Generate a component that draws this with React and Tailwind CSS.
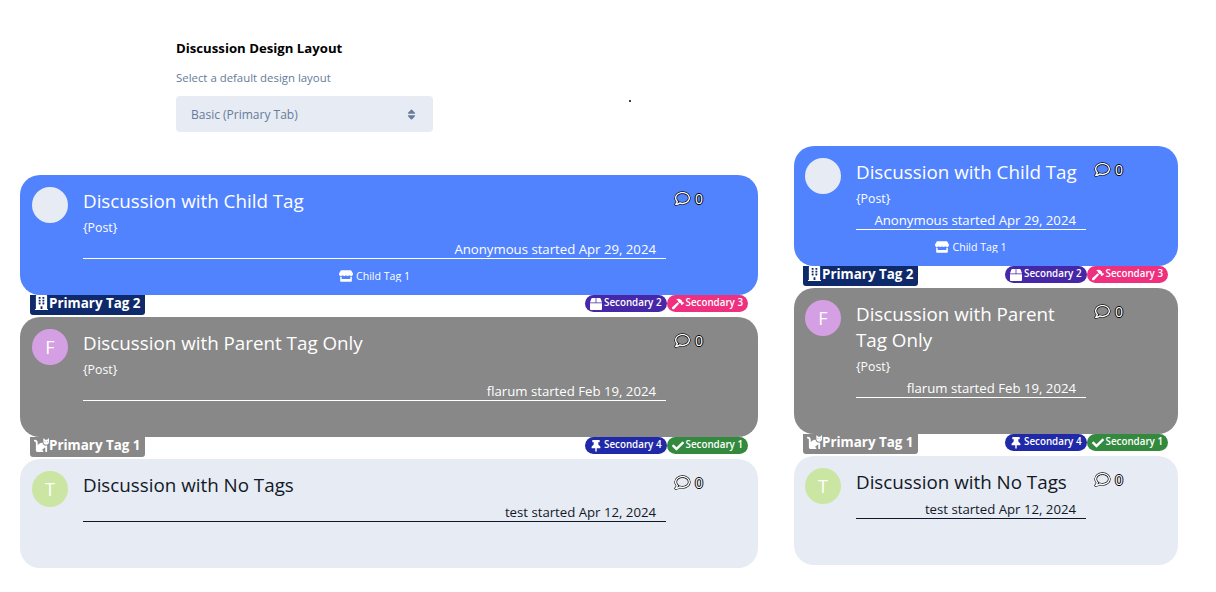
import { FaBox, FaBuilding, FaCat, FaCheck, FaHammer, FaRegComment, FaStore, FaThumbtack, FaSort } from 'react-icons/fa';

const cards = [
  {
    title: 'Discussion with Child Tag',
    post: '{Post}',
    by: 'Anonymous started Apr 29, 2024',
    bg: 'bg-[#5183ff]',
    text: 'text-white',
    line: 'border-white',
    avatar: '',
    avatarBg: 'bg-[#e7ebf3]',
    child: true,
    primary: { name: 'Primary Tag 2', Icon: FaBuilding, bg: 'bg-[#0e2a6b]' },
    secondary: [
      { name: 'Secondary 2', Icon: FaBox, bg: 'bg-[#4527a8]' },
      { name: 'Secondary 3', Icon: FaHammer, bg: 'bg-[#ee307f]' },
    ],
  },
  {
    title: 'Discussion with Parent Tag Only',
    post: '{Post}',
    by: 'flarum started Feb 19, 2024',
    bg: 'bg-[#888888]',
    text: 'text-white',
    line: 'border-white',
    avatar: 'F',
    avatarBg: 'bg-[#d5a0e3]',
    primary: { name: 'Primary Tag 1', Icon: FaCat, bg: 'bg-[#888888]' },
    secondary: [
      { name: 'Secondary 4', Icon: FaThumbtack, bg: 'bg-[#2029a8]' },
      { name: 'Secondary 1', Icon: FaCheck, bg: 'bg-[#338a3e]' },
    ],
  },
  {
    title: 'Discussion with No Tags',
    by: 'test started Apr 12, 2024',
    bg: 'bg-[#e7ebf3]',
    text: 'text-[#111827]',
    line: 'border-[#111827]',
    avatar: 'T',
    avatarBg: 'bg-[#cbe6a3]',
    short: true,
  },
];

const Card = ({ card, narrow }) => {
  const { Icon: PrimaryIcon } = card.primary || {};
  return (
    <div>
      <div
        className={`flex rounded-[20px] pt-3 ${narrow ? 'pl-[11px]' : 'pl-3'} ${card.bg} ${card.text} ${
          card.short ? 'h-[109px]' : narrow && card.avatar === 'F' ? 'h-[146px]' : 'h-[120px]'
        }`}
      >
        <div className={`flex h-9 w-9 shrink-0 items-center justify-center rounded-full text-lg text-white ${card.avatarBg}`}>
          {card.avatar}
        </div>
        <div className={`ml-[15px] flex min-w-0 flex-col pt-[1px] ${narrow ? 'w-[230px]' : 'w-[583px]'}`}>
          <div className="text-[18.8px] leading-[26px]">{card.title}</div>
          {card.post && <div className="mt-[5px] text-[12.3px] leading-[18px]">{card.post}</div>}
          <div className={`border-b pr-[10px] text-right text-[13.2px] leading-[18px] ${card.line} ${card.post ? 'mt-[3px]' : 'mt-[5px]'}`}>
            {card.by}
          </div>
          {card.child && (
            <div className="mt-[10px] flex h-[13px] items-start justify-center gap-[3px] overflow-hidden text-[10.6px] leading-[14px]">
              <FaStore className="text-[14px]" />
              Child Tag 1
            </div>
          )}
        </div>
        <div className="ml-[9px] mt-[3px] flex h-4 items-center gap-[5px] text-[14px] text-white [text-shadow:1px_0_0_#000,-1px_0_0_#000,0_1px_0_#000,0_-1px_0_#000]">
          <FaRegComment stroke="#000" strokeWidth={45} className="overflow-visible text-[15px] text-white [paint-order:stroke]" />
          0
        </div>
      </div>
      {card.primary && (
        <div className={`flex h-[22px] items-start justify-between pr-[10px] ${narrow ? 'pl-[9px]' : 'pl-[10px]'}`}>
          <div className={`flex h-5 items-start overflow-hidden rounded-b-[3px] px-[4px] text-[13.4px] font-bold leading-[17px] text-white ${card.primary.bg}`}>
            <PrimaryIcon className="text-[15px]" />
            {card.primary.name}
          </div>
          <div className="flex">
            {card.secondary.map(({ name, Icon, bg }) => (
              <div key={name} className={`flex h-[17px] items-center gap-[2px] rounded-full px-[5px] text-[9.8px] font-semibold text-white ${bg}`}>
                <Icon className="text-[12px]" />
                {name}
              </div>
            ))}
          </div>
        </div>
      )}
    </div>
  );
};

export default function App() {
  return (
    <div className="relative flex h-[592px] bg-white font-['Open_Sans','Noto_Sans',sans-serif]">
      <div className="ml-5 w-[738px]">
        <div className="ml-[156px] h-[175px] pt-[40px]">
          <div className="text-[13.2px] font-bold leading-4 text-black">Discussion Design Layout</div>
          <div className="mt-[14px] text-[11.4px] leading-4 text-[#667c99]">Select a default design layout</div>
          <div className="mt-[10px] flex h-9 w-[257px] items-center justify-between rounded-[4px] bg-[#e7ebf3] pl-[15px] pr-[17px] text-[12px] text-[#667c99]">
            <div className="h-[15px] overflow-hidden leading-[16px]">Basic (Primary Tab)</div>
            <FaSort className="-mr-[2px] text-[13px]" />
          </div>
        </div>
        {cards.map((c) => (
          <Card key={c.title} card={c} />
        ))}
      </div>
      <div className="ml-9 w-[384px] pt-[146px]">
        {cards.map((c) => (
          <Card key={c.title} card={c} narrow />
        ))}
      </div>
      <div className="absolute left-[629px] top-[100px] h-[2px] w-[2px] rounded-full bg-black" />
    </div>
  );
}
